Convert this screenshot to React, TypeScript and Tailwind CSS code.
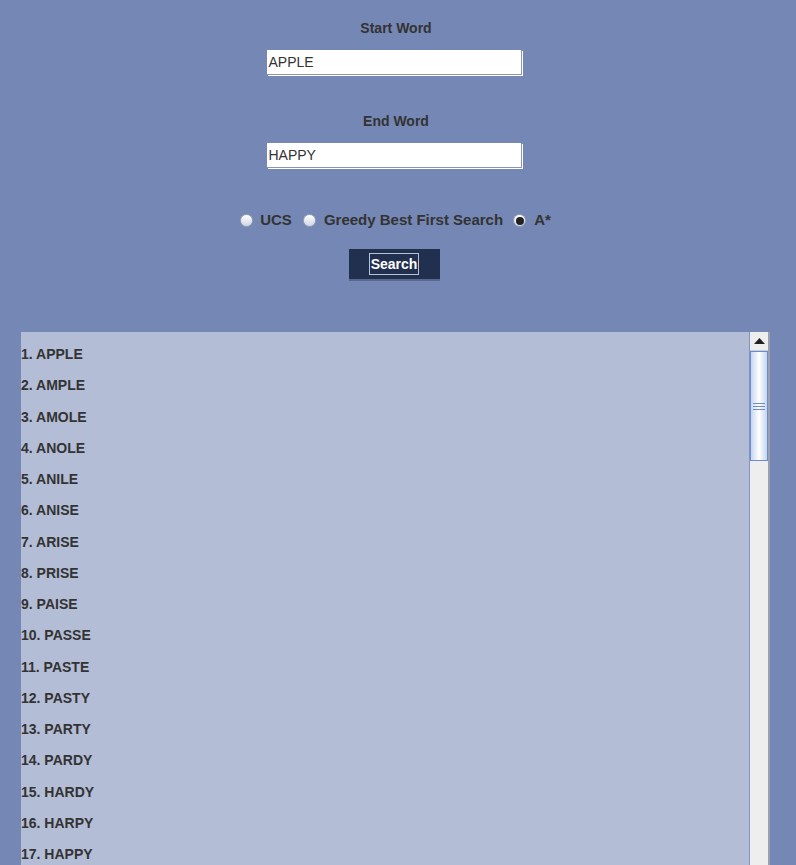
import React from 'react';

const words = [
  'APPLE', 'AMPLE', 'AMOLE', 'ANOLE', 'ANILE', 'ANISE', 'ARISE', 'PRISE', 'PAISE',
  'PASSE', 'PASTE', 'PASTY', 'PARTY', 'PARDY', 'HARDY', 'HARPY', 'HAPPY',
];

function Radio({ checked }: { checked?: boolean }) {
  return (
    <span className="w-[13px] h-[13px] rounded-full border border-[#9aa3b8] bg-gradient-to-b from-white to-[#cfd6e4] flex items-center justify-center shrink-0">
      {checked && <span className="w-[8px] h-[8px] rounded-full bg-[#222]" />}
    </span>
  );
}

function Field({ value }: { value: string }) {
  return (
    <div className="w-[255px] h-[25px] bg-white border-r border-b border-[#8d95aa] shadow-[1px_1px_0_#ffffff] flex items-center pl-[2px] text-[14px] text-[#333]">
      {value}
    </div>
  );
}

export default function App() {
  return (
    <div className="w-[796px] h-[865px] overflow-hidden bg-[#7587b4] font-['Liberation_Sans',Arial,sans-serif] text-[#333]">
      <div className="flex flex-col items-center pt-[20px] pr-[8px]">
        <div className="text-[14px] font-bold h-[17px] leading-[17px] ml-[4px]">Start Word</div>
        <div className="mt-[13px]"><Field value="APPLE" /></div>
        <div className="text-[14px] font-bold h-[17px] leading-[17px] mt-[38px] ml-[4px]">End Word</div>
        <div className="mt-[13px]"><Field value="HAPPY" /></div>
        <div className="flex items-center mt-[44px] text-[15px] font-bold h-[17px] ml-[3px]">
          <Radio />
          <span className="ml-[7px]">UCS</span>
          <span className="ml-[11px]"><Radio /></span>
          <span className="ml-[8px]">Greedy Best First Search</span>
          <span className="ml-[10px]"><Radio checked /></span>
          <span className="ml-[8px]">A*</span>
        </div>
        <div className="mt-[20px] w-[91px] h-[32px] bg-[#22304f] border-b-2 border-[#5a6890] flex items-center justify-center">
          <span className="border border-[#b9c2d8] px-[1px] h-[22px] flex items-center text-white font-bold text-[14px]">Search</span>
        </div>
      </div>
      <div className="ml-[21px] mt-[51px] w-[749px] h-[540px] flex">
        <div className="flex-1 bg-[#b3bdd6] pt-[7px]">
          {words.map((w, i) => (
            <div key={i} className="h-[31.25px] flex items-center text-[14px] font-bold">
              {i + 1}. {w}
            </div>
          ))}
        </div>
        <div className="w-[21px] bg-[#eeeeee] border-l border-[#7f95c4] border-r-2 border-r-[#9aa0ad] flex flex-col">
          <div className="h-[19px] flex items-center justify-center border-b border-[#c8cdd8]">
            <svg width="11" height="6" viewBox="0 0 11 6"><path d="M0 6 L5.5 0 L11 6 Z" fill="#222" /></svg>
          </div>
          <div className="h-[110px] border border-[#6d8ccc] bg-gradient-to-r from-[#c6d5ee] via-white to-[#c6d5ee] flex items-center justify-center">
            <div className="flex flex-col gap-[2px]">
              <div className="w-[12px] h-[1px] bg-[#6d8ccc]" />
              <div className="w-[12px] h-[1px] bg-[#6d8ccc]" />
              <div className="w-[12px] h-[1px] bg-[#6d8ccc]" />
            </div>
          </div>
        </div>
      </div>
    </div>
  );
}
